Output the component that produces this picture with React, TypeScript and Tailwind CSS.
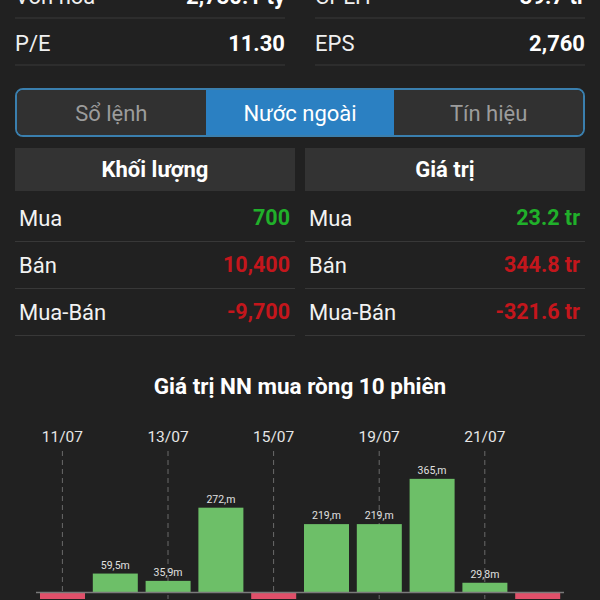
import React from "react";

const topStats = [
  [
    { label: "Vốn hóa", value: "2,730.1 tỷ" },
    { label: "CPLH", value: "39.7 tr" },
  ],
  [
    { label: "P/E", value: "11.30" },
    { label: "EPS", value: "2,760" },
  ],
];

const GREEN = "text-[#20b02a]";
const RED = "text-[#c4161c]";

const volRows = [
  { label: "Mua", value: "700", cls: GREEN },
  { label: "Bán", value: "10,400", cls: RED },
  { label: "Mua-Bán", value: "-9,700", cls: RED },
];
const valRows = [
  { label: "Mua", value: "23.2 tr", cls: GREEN },
  { label: "Bán", value: "344.8 tr", cls: RED },
  { label: "Mua-Bán", value: "-321.6 tr", cls: RED },
];

const bars: { v: number; label?: string }[] = [
  { v: -30 },
  { v: 59.5, label: "59,5m" },
  { v: 35.9, label: "35,9m" },
  { v: 272, label: "272,m" },
  { v: -30 },
  { v: 219, label: "219,m" },
  { v: 219, label: "219,m" },
  { v: 365, label: "365,m" },
  { v: 29.8, label: "29,8m" },
  { v: -30 },
];

const dates = [
  { i: 0, t: "11/07" },
  { i: 2, t: "13/07" },
  { i: 4, t: "15/07" },
  { i: 6, t: "19/07" },
  { i: 8, t: "21/07" },
];

function Table({ title, rows }: { title: string; rows: typeof volRows }) {
  return (
    <div className="flex flex-col">
      <div className="h-[43px] bg-[#333333] flex items-center justify-center text-white font-bold text-[22px]">
        {title}
      </div>
      <div className="mt-[4px] flex flex-col">
        {rows.map((r) => (
          <div
            key={r.label}
            className="h-[47px] flex items-center justify-between pl-[4px] pr-[5px] border-b border-[#383838] text-[22px]"
          >
            <span className="text-[#f2f2f2]">{r.label}</span>
            <span className={`${r.cls} font-bold text-[21.5px]`}>{r.value}</span>
          </div>
        ))}
      </div>
    </div>
  );
}

function Chart() {
  const base = 193;
  const scale = 0.31;
  const x0 = 36;
  const slot = 52.8;
  return (
    <svg width="600" height="200" viewBox="0 0 600 200" className="block">
      {dates.map((d) => {
        const cx = x0 + slot * d.i + slot / 2;
        return (
          <g key={d.t}>
            <line x1={cx} y1={52} x2={cx} y2={200} stroke="#6a6a6a" strokeWidth={1} strokeDasharray="5 4" />
            <text
              x={cx}
              y={43}
              textAnchor="middle"
              fill="#e6e6e6"
              fontSize="15.5"
              fontFamily="Roboto, sans-serif"
            >
              {d.t}
            </text>
          </g>
        );
      })}
      {bars.map((b, i) => {
        const x = x0 + slot * i + 4;
        const h = Math.abs(b.v) * scale;
        if (b.v < 0) {
          return <rect key={i} x={x} y={base + 1} width={45} height={h} fill="#e0506a" />;
        }
        return (
          <g key={i}>
            <rect x={x} y={base - h} width={45} height={h} fill="#6dbf68" />
            {b.label && (
              <text
                x={x + 22.5}
                y={base - h - 5}
                textAnchor="middle"
                fill="#e0e0e0"
                fontSize="10.5"
                fontFamily="Roboto, sans-serif"
              >
                {b.label}
              </text>
            )}
          </g>
        );
      })}
      <line x1={36} y1={base + 0.5} x2={564} y2={base + 0.5} stroke="#7a7a7a" strokeWidth={1.5} />
    </svg>
  );
}

export default function App() {
  return (
    <div className="w-[600px] h-[600px] overflow-hidden bg-[#212121] font-['Roboto',sans-serif]">
      <div className="mt-[-28px] px-[15px] flex flex-col">
        {topStats.map((row, ri) => (
          <div key={ri} className="grid grid-cols-2 gap-x-[30px]">
            {row.map((c) => (
              <div
                key={c.label}
                className="h-[47px] pt-[3px] flex items-center justify-between border-b-2 border-[#2d2d2d] text-[22px]"
              >
                <span className="text-[#f0f0f0]">{c.label}</span>
                <span className="text-white font-bold">{c.value}</span>
              </div>
            ))}
          </div>
        ))}
      </div>

      <div className="mx-[15px] mt-[22px] h-[49px] rounded-[8px] border-2 border-[#3a7fae] overflow-hidden grid grid-cols-3 text-[22px]">
        <div className="bg-[#313131] text-[#9c9c9c] flex items-center justify-center pt-[2px]">Sổ lệnh</div>
        <div className="bg-[#2b80c2] text-white flex items-center justify-center pt-[2px]">Nước ngoài</div>
        <div className="bg-[#313131] text-[#9c9c9c] flex items-center justify-center pt-[2px]">Tín hiệu</div>
      </div>

      <div className="mx-[15px] mt-[11px] grid grid-cols-2 gap-x-[10px]">
        <Table title="Khối lượng" rows={volRows} />
        <Table title="Giá trị" rows={valRows} />
      </div>

      <div className="mt-[37px] text-center text-white font-bold text-[22.5px] leading-[26px]">
        Giá trị NN mua ròng 10 phiên
      </div>
      <div>
        <Chart />
      </div>
    </div>
  );
}
